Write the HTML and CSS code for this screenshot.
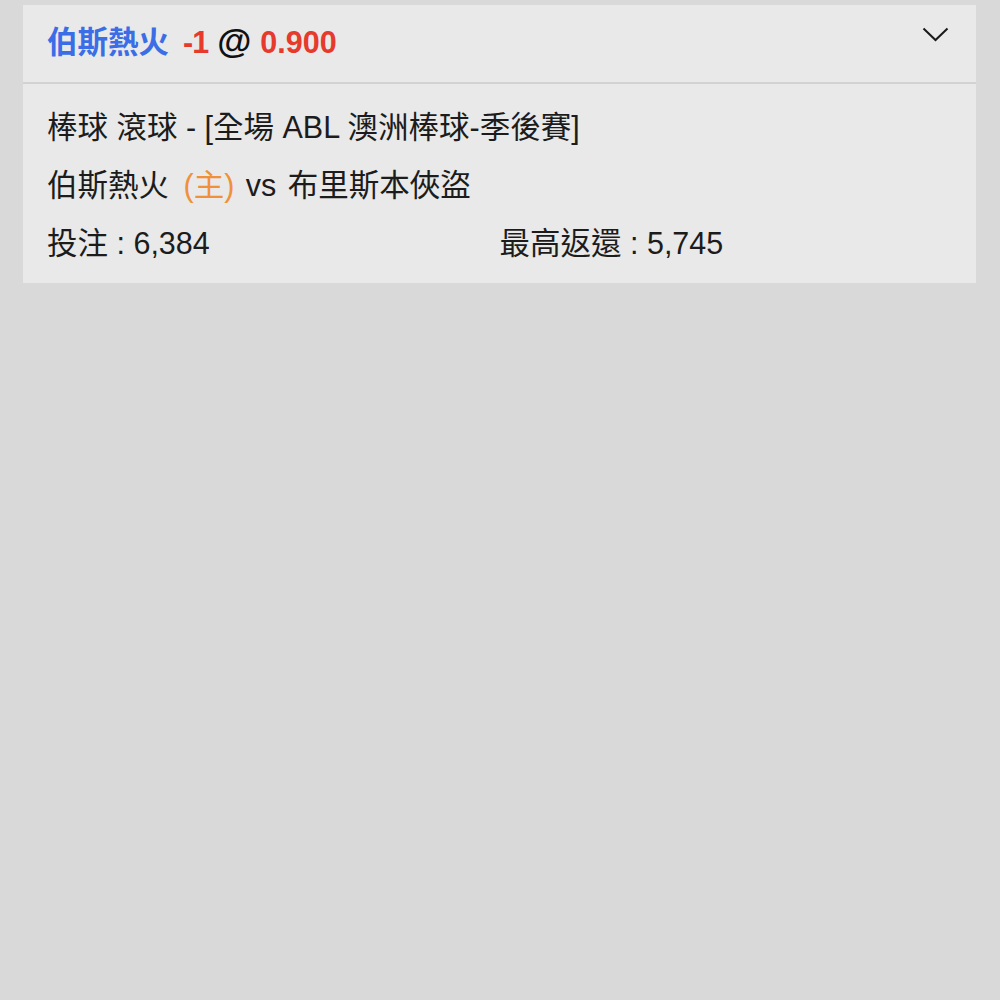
FILE: index.html
```html
<!DOCTYPE html>
<html lang="zh-Hant">
<head>
<meta charset="utf-8">
<link rel="stylesheet" href="styles.css">
</head>
<body>
<div class="page">
  <div class="card">
    <div class="card-header">
      <div class="title">
        <span class="team">伯斯熱火</span>
        <span class="hcp">-1</span>
        <span class="at">@</span>
        <span class="odds">0.900</span>
      </div>
      <svg class="chevron" width="27" height="15" viewBox="0 0 27 15"><path d="M1.5 1.5 L13.5 13 L25.5 1.5" fill="none" stroke="#1a1a1a" stroke-width="2"/></svg>
    </div>
    <div class="card-body">
      <div class="row">棒球 滾球 - [全場 ABL 澳洲棒球-季後賽]</div>
      <div class="row teams">伯斯熱火 <span class="home">(主)</span> vs 布里斯本俠盜</div>
      <div class="row stats">
        <div>投注 : 6,384</div>
        <div>最高返還 : 5,745</div>
      </div>
    </div>
  </div>
</div>
</body>
</html>
```
FILE: styles.css
```css
html, body {
  margin: 0;
  padding: 0;
  background: #d9d9d9;
}
body {
  font-family: "Liberation Sans", "Noto Sans CJK TC", sans-serif;
  color: #1c1c1c;
}
.page {
  padding: 5px 24px 0 23px;
}
.card {
  background: #e9e9e9;
}
.card-header {
  height: 77px;
  display: flex;
  align-items: center;
  justify-content: space-between;
  padding: 0 27px 0 24px;
  border-bottom: 2px solid #d2d2d2;
}
.title {
  font-size: 30.5px;
  font-weight: bold;
  display: flex;
  align-items: baseline;
  margin-top: -7px;
}
.team { color: #3a6de6; margin-right: 14px; }
.hcp { color: #e53a2c; margin-right: 9px; letter-spacing: -1px; }
.odds { color: #e53a2c; }
.at { color: #111; font-size: 35px; margin-right: 9px; }
.chevron {
  margin-top: -18px;
}
.card-body {
  padding: 14px 24px 11px 24px;
}
.row {
  font-size: 30.5px;
  line-height: 58px;
  height: 58px;
  white-space: nowrap;
}
.teams { word-spacing: 3px; }
.home { color: #f0913a; margin-left: 3px; }
.stats {
  display: grid;
  grid-template-columns: 1fr 1fr;
}
```
